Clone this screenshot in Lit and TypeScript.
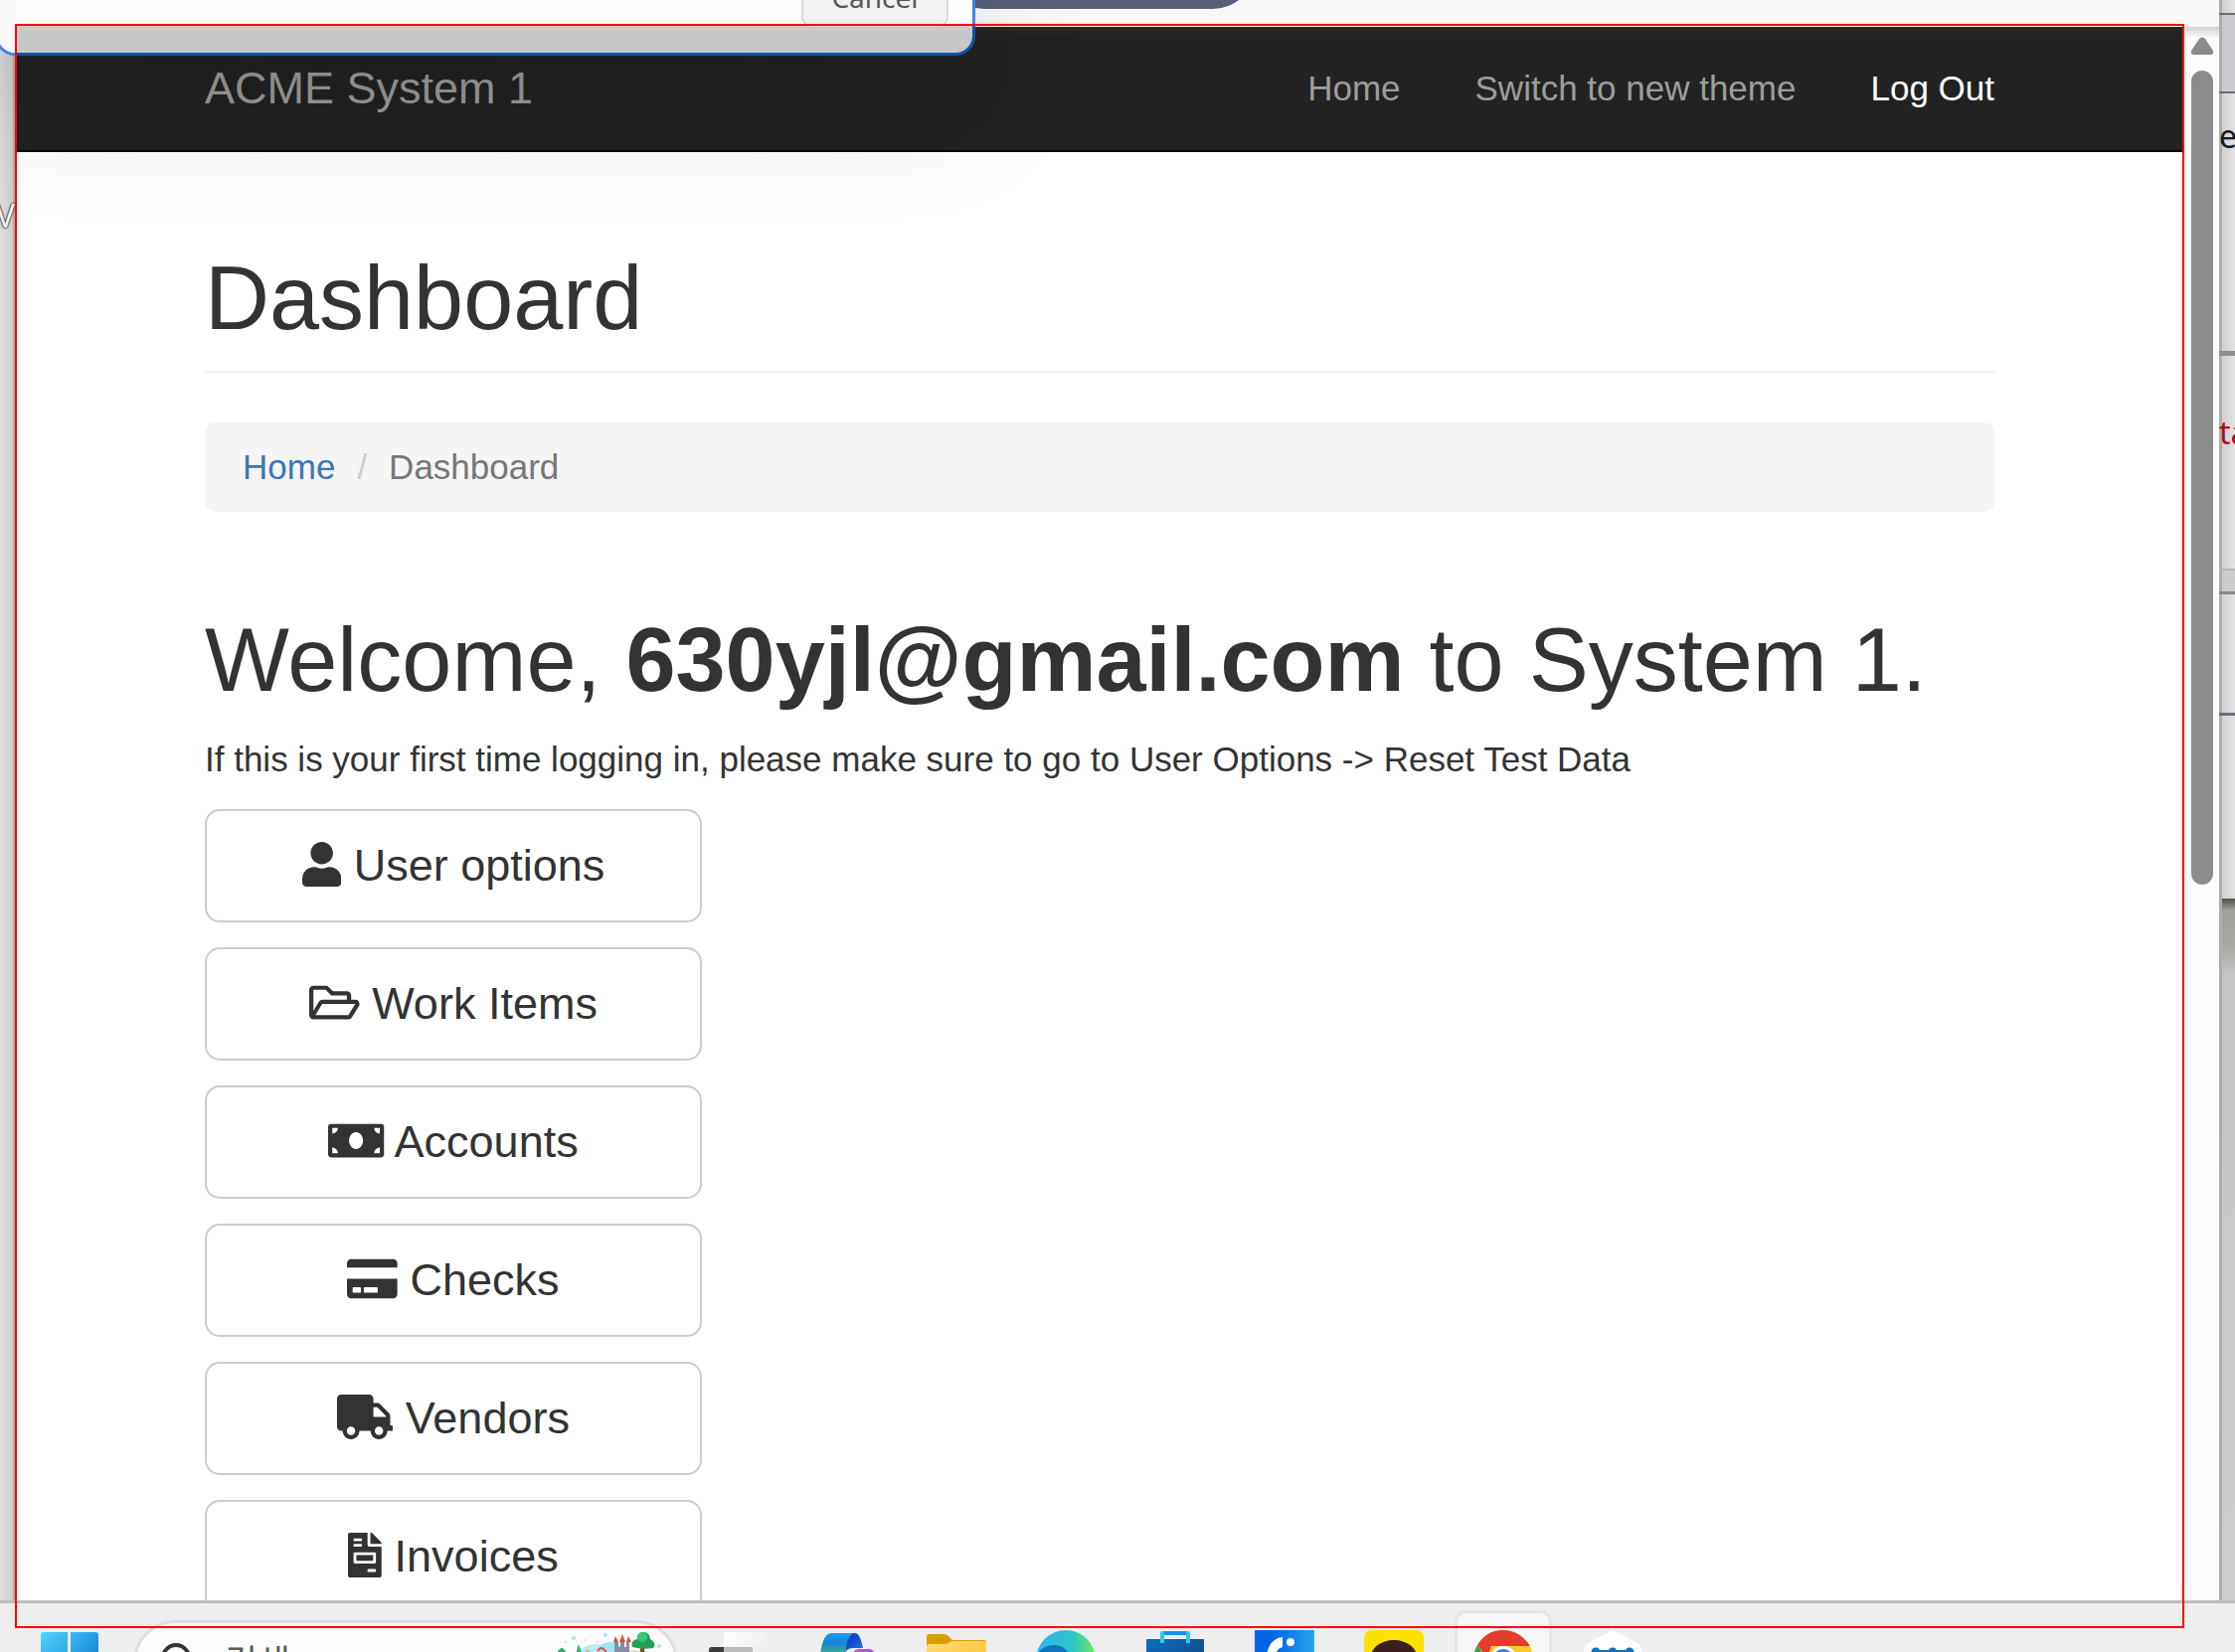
import { LitElement, html, svg, css } from "lit";
import { customElement, property } from "lit/decorators.js";

interface MenuItem {
  label: string;
  width: number;
  path: string;
}

// Icon glyphs share a 512-unit em height; width varies per glyph.
const MENU: MenuItem[] = [
  {
    label: "User options",
    width: 448,
    path: "M224 256c70.7 0 128-57.3 128-128S294.7 0 224 0 96 57.3 96 128s57.3 128 128 128zm89.6 32h-16.7c-22.2 10.2-46.9 16-72.9 16s-50.6-5.8-72.9-16h-16.7C60.2 288 0 348.2 0 422.4V464c0 26.5 21.5 48 48 48h352c26.5 0 48-21.5 48-48v-41.6c0-74.2-60.2-134.4-134.4-134.4z",
  },
  {
    label: "Work Items",
    width: 576,
    path: "M527.9 224H480v-48c0-26.5-21.5-48-48-48H272l-64-64H48C21.5 64 0 85.5 0 112v288c0 26.5 21.5 48 48 48h400c16.5 0 31.9-8.5 40.7-22.6l79.9-128c20-31.9-3-73.4-40.7-73.4zM48 118c0-3.3 2.7-6 6-6h134.1l64 64H426c3.3 0 6 2.7 6 6v42H152c-16.8 0-32.4 8.8-41.1 23.2L48 351.4zm400 282H72l77.2-128H528z",
  },
  {
    label: "Accounts",
    width: 640,
    path: "M608 64H32C14.33 64 0 78.33 0 96v320c0 17.67 14.33 32 32 32h576c17.67 0 32-14.33 32-32V96c0-17.67-14.33-32-32-32zM48 400v-64c35.35 0 64 28.65 64 64H48zm0-224v-64h64c0 35.35-28.65 64-64 64zm272 176c-44.19 0-80-42.99-80-96 0-53.02 35.82-96 80-96s80 42.98 80 96c0 53.03-35.83 96-80 96zm272 48h-64c0-35.35 28.65-64 64-64v64zm0-224c-35.35 0-64-28.65-64-64h64v64z",
  },
  {
    label: "Checks",
    width: 576,
    path: "M0 432c0 26.5 21.5 48 48 48h480c26.5 0 48-21.5 48-48V256H0v176zm192-68c0-6.6 5.4-12 12-12h136c6.6 0 12 5.4 12 12v40c0 6.6-5.4 12-12 12H204c-6.6 0-12-5.4-12-12v-40zm-128 0c0-6.6 5.4-12 12-12h72c6.6 0 12 5.4 12 12v40c0 6.6-5.4 12-12 12H76c-6.6 0-12-5.4-12-12v-40zM576 80v48H0V80c0-26.5 21.5-48 48-48h480c26.5 0 48 21.5 48 48z",
  },
  {
    label: "Vendors",
    width: 640,
    path: "M624 352h-16V243.9c0-12.7-5.1-24.9-14.1-33.9L494 110.1c-9-9-21.2-14.1-33.9-14.1H416V48c0-26.5-21.5-48-48-48H48C21.5 0 0 21.5 0 48v320c0 26.5 21.5 48 48 48h16c0 53 43 96 96 96s96-43 96-96h128c0 53 43 96 96 96s96-43 96-96h48c8.8 0 16-7.2 16-16v-32c0-8.8-7.2-16-16-16zM160 464c-26.5 0-48-21.5-48-48s21.5-48 48-48 48 21.5 48 48-21.5 48-48 48zm320 0c-26.5 0-48-21.5-48-48s21.5-48 48-48 48 21.5 48 48-21.5 48-48 48zm80-208H416V144h44.1l99.9 99.9V256z",
  },
  {
    label: "Invoices",
    width: 384,
    path: "M288 256H96v64h192v-64zm89-151L279.1 7c-4.5-4.5-10.6-7-17-7H256v128h128v-6.1c0-6.3-2.5-12.4-7-16.9zm-153 31V0H24C10.7 0 0 10.7 0 24v464c0 13.3 10.7 24 24 24h336c13.3 0 24-10.7 24-24V160H248c-13.2 0-24-10.8-24-24zM64 72c0-4.42 3.58-8 8-8h80c4.42 0 8 3.58 8 8v16c0 4.42-3.58 8-8 8H72c-4.42 0-8-3.58-8-8V72zm0 64c0-4.42 3.58-8 8-8h80c4.42 0 8 3.58 8 8v16c0 4.42-3.58 8-8 8H72c-4.42 0-8-3.58-8-8v-16zm256 304c0 4.42-3.58 8-8 8h-80c-4.42 0-8-3.58-8-8v-16c0-4.42 3.58-8 8-8h80c4.42 0 8 3.58 8 8v16zm0-200v96c0 8.84-7.16 16-16 16H80c-8.84 0-16-7.16-16-16v-96c0-8.84 7.16-16 16-16h224c8.84 0 16 7.16 16 16z",
  },
];

@customElement("dashboard-page")
export class DashboardPage extends LitElement {
  @property() email = "";

  static styles = css`
    :host {
      display: block;
      background: #fff;
      color: #333;
      font-family: "Liberation Sans", Arial, sans-serif;
      font-size: 35px;
      line-height: 50px;
    }
    .container {
      max-width: 1800px;
      margin: 0 auto;
    }
    .navbar {
      background: linear-gradient(#282c2a, #222 8px);
      border-bottom: 2px solid #080808;
    }
    .bar {
      display: flex;
      align-items: center;
      justify-content: space-between;
      height: 124px;
    }
    .brand {
      color: #9d9d9d;
      font-size: 45px;
      text-decoration: none;
    }
    .links {
      display: flex;
      gap: 75px;
    }
    .links a {
      color: #9d9d9d;
      text-decoration: none;
    }
    .links .active {
      color: #fff;
    }
    h1 {
      margin: 0;
      font-size: 90px;
      font-weight: 400;
      line-height: 99px;
    }
    .header {
      margin: 98px 0 50px;
      padding-bottom: 23px;
      border-bottom: 2px solid #eee;
    }
    .crumbs {
      display: flex;
      gap: 22px;
      margin: 0 0 100px;
      padding: 20px 38px;
      list-style: none;
      background: #f5f5f5;
      border-radius: 10px;
      color: #777;
    }
    .crumbs a {
      color: #3c76b8;
      text-decoration: none;
    }
    .slash {
      color: #ccc;
    }
    .intro {
      margin: 25px 0;
    }
    .menu {
      display: grid;
      grid-template-columns: minmax(0, 500px);
      gap: 25px;
    }
    .item {
      display: flex;
      align-items: center;
      justify-content: center;
      padding: 25px 40px;
      border: 2px solid #ccc;
      border-radius: 15px;
      background: #fff;
      color: #333;
      font: 45px/60px "Liberation Sans", Arial, sans-serif;
    }
    .label {
      white-space: pre;
    }
    .icon {
      height: 45px;
      margin-bottom: 4px;
      fill: currentColor;
    }
  `;

  render() {
    return html`
      <nav class="navbar">
        <div class="container bar">
          <a class="brand" href="#">ACME System 1</a>
          <div class="links">
            <a href="#">Home</a>
            <a href="#">Switch to new theme</a>
            <a class="active" href="#">Log Out</a>
          </div>
        </div>
      </nav>
      <main class="container">
        <header class="header"><h1>Dashboard</h1></header>
        <ol class="crumbs">
          <li><a href="#">Home</a></li>
          <li class="slash">/</li>
          <li>Dashboard</li>
        </ol>
        <h1>Welcome, <b>${this.email}</b> to System 1.</h1>
        <p class="intro">If this is your first time logging in, please make sure to go to User Options -&gt; Reset Test Data</p>
        <div class="menu">
          ${MENU.map(
            (m) => html`<button class="item" type="button">
              <svg class="icon" viewBox="0 0 ${m.width} 512" aria-hidden="true"><path d=${m.path}></path></svg>
              <span class="label">${" " + m.label}</span>
            </button>`
          )}
        </div>
      </main>
    `;
  }
}

// Taskbar icons are drawn in a 60 x 60 box.
const TASK_VIEW = svg`
  <defs>
    <linearGradient id="g" x1="0" y1="0" x2="1" y2="1"><stop offset="0" stop-color="#fff"/><stop offset="1" stop-color="#e4e4e4"/></linearGradient>
  </defs>
  <rect x="1" y="17" width="44" height="40" rx="3" fill="#3c3c3c"/>
  <rect x="16" y="2" width="44" height="44" rx="3" fill="url(#g)"/>
  <rect x="16" y="17" width="29" height="30" fill="#bcbcbc"/>`;

const COPILOT = svg`
  <defs>
    <linearGradient id="a" x1="0" y1="0" x2="0" y2="1"><stop offset="0" stop-color="#1f9cf0"/><stop offset=".2" stop-color="#1386dc"/><stop offset=".4" stop-color="#3aa58c"/><stop offset="1" stop-color="#e8c52c"/></linearGradient>
    <linearGradient id="b" x1="0" y1="0" x2="1" y2="1"><stop offset="0" stop-color="#0a28b8"/><stop offset="1" stop-color="#1f78e6"/></linearGradient>
    <linearGradient id="c" x1="0" y1="0" x2="1" y2="0"><stop offset="0" stop-color="#c85fc8"/><stop offset="1" stop-color="#9a4fe8"/></linearGradient>
  </defs>
  <path d="M3 24Q6 3 14 3H40Q31 5 28 22L20 50H4Q-2 46 3 24Z" fill="url(#a)"/>
  <path d="M28 22Q31 3 38 3Q43 3 46 18H36Q31 18 28 22Z" fill="url(#b)"/>
  <path d="M36 24Q37 19 42 19H52Q58 19 58 28V50H30Z" fill="url(#c)"/>`;

const FOLDER = svg`
  <defs><linearGradient id="f" x1="0" y1="0" x2="1" y2="1"><stop offset="0" stop-color="#ffdc73"/><stop offset="1" stop-color="#fcbc2c"/></linearGradient></defs>
  <path d="M0 7Q0 4 3 4H18Q20 4 22 6L26 10H58Q60 10 60 13V30H0Z" fill="#dc9c08"/>
  <path d="M0 17Q0 14 3 14H18Q20 14 22 13L25 11H57Q60 11 60 14V54H0Z" fill="url(#f)"/>`;

const EDGE = svg`
  <defs>
    <linearGradient id="e" x1="0" y1="0" x2="1" y2="0"><stop offset="0" stop-color="#32b4f6"/><stop offset=".6" stop-color="#2cc4c8"/><stop offset="1" stop-color="#6cea58"/></linearGradient>
  </defs>
  <circle cx="30" cy="30" r="30" fill="url(#e)"/>
  <path d="M1 24Q8 15 18 15Q32 15 36 32L30 60Q0 54 1 24Z" fill="#1074bc"/>`;

const STORE = svg`
  <defs><linearGradient id="s" x1="0" y1="0" x2="1" y2="1"><stop offset="0" stop-color="#0a6cc4"/><stop offset="1" stop-color="#18406e"/></linearGradient></defs>
  <path d="M1 10Q1 9 2 9H58Q59 9 59 10V56H1Z" fill="url(#s)"/>
  <path d="M17 13V3H43V13" fill="none" stroke="#28c8fa" stroke-width="4" stroke-linejoin="round"/>
  <path d="M19 3H41" stroke="#1494f0" stroke-width="4"/>`;

const INFO = svg`
  <defs><linearGradient id="i" x1="0" y1="0" x2="1" y2="0"><stop offset=".3" stop-color="#0064e4"/><stop offset="1" stop-color="#28a4f0"/></linearGradient></defs>
  <rect width="60" height="60" fill="url(#i)"/>
  <path d="M12 28Q13 9 28 7V17Q21 19 20 28Z" fill="#fff"/>
  <circle cx="36" cy="12" r="4" fill="#fff"/>
  <path d="M32 24H40V50H32Z" fill="#fff"/>`;

const TALK = svg`
  <rect width="60" height="60" rx="7" fill="#fce000"/>
  <ellipse cx="30" cy="29" rx="24" ry="19" fill="#3c1e1e"/>`;

const CHROME = svg`
  <circle cx="30" cy="30" r="30" fill="#fbc52c"/>
  <path d="M4 15L17 36L30 60A30 30 0 0 1 4 15Z" fill="#34a050"/>
  <path d="M18 16H57Q46 0 30 0Q13 0 4 15L14 28Z" fill="#e53c30"/>
  <circle cx="30" cy="30" r="14" fill="#fff"/>
  <circle cx="30" cy="30" r="11" fill="#3c7eee"/>`;

const HEX = svg`
  <path d="M26 2Q30 -1 34 2L55 13Q59 15 59 20V44L30 60L1 44V20Q1 15 5 13Z" fill="#fff"/>
  <path d="M13 42V22M30 42V22M47 42V22" stroke="#1074bc" stroke-width="9" stroke-linecap="round"/>
  <path d="M13 20H47V42H13Z" fill="#1074bc"/>`;

const APPS = [
  { name: "Task view", art: TASK_VIEW },
  { name: "Copilot", art: COPILOT },
  { name: "File Explorer", art: FOLDER },
  { name: "Edge", art: EDGE },
  { name: "Store", art: STORE },
  { name: "Info", art: INFO },
  { name: "Talk", art: TALK },
  { name: "Chrome", art: CHROME, active: true },
  { name: "Hub", art: HEX },
];

@customElement("task-bar")
export class TaskBar extends LitElement {
  static styles = css`
    :host {
      display: flex;
      height: 49px;
      overflow: hidden;
      padding-left: 15px;
      background: #eee;
      font-family: "Noto Sans CJK KR", sans-serif;
    }
    .slot {
      flex: none;
      display: flex;
      justify-content: center;
      width: 110px;
      height: 100px;
      padding: 27px 0 0;
      box-sizing: border-box;
      border: 0;
      background: none;
    }
    .art {
      width: 60px;
      height: 60px;
      flex: none;
      overflow: visible;
    }
    .active {
      width: 98px;
      margin: 7px 6px 0;
      padding-top: 17px;
      border: 3px solid #e5e5e5;
      border-radius: 12px;
      background: #f6f6f6;
    }
    .search {
      flex: none;
      display: flex;
      align-items: center;
      gap: 32px;
      box-sizing: border-box;
      width: 548px;
      height: 84px;
      margin: 17px 5px 0 9px;
      padding: 0 8px 4px 25px;
      border: 3px solid #dedede;
      border-radius: 42px;
      background: #fbfbfb;
    }
    .lens {
      flex: none;
      width: 32px;
      height: 40px;
    }
    .field {
      flex: 1;
      min-width: 0;
      padding: 0;
      border: 0;
      outline: 0;
      background: none;
      color: #5c5c5c;
      font: 36px/50px "Noto Sans CJK KR", sans-serif;
    }
    .field::placeholder {
      color: #5c5c5c;
      opacity: 1;
    }
    .scene {
      flex: none;
      width: 112px;
      height: 60px;
    }
  `;

  render() {
    return html`
      <button class="slot" type="button" aria-label="Start">
        <svg class="art" viewBox="0 0 60 60">
          <defs>
            <linearGradient id="w" x1="0" y1="0" x2="1" y2="1">
              <stop offset="0" stop-color="#50d4ff" /><stop offset="1" stop-color="#0068c8" />
            </linearGradient>
          </defs>
          <path d="M4 2H28V29H1V5Q1 2 4 2ZM31 2H56Q59 2 59 5V29H31ZM1 32H28V59H1ZM31 32H59V59H31Z" fill="url(#w)" />
        </svg>
      </button>
      <label class="search">
        <svg class="lens" viewBox="0 0 32 40" fill="none" stroke="#333" stroke-width="4">
          <circle cx="15" cy="18" r="13" /><path d="M23 28L31 37" />
        </svg>
        <input class="field" type="text" placeholder="검색" aria-label="검색" />
        <svg class="scene" viewBox="0 0 112 60">
          <ellipse cx="40" cy="24" rx="16" ry="10" fill="#b8ecf8" />
          <ellipse cx="55" cy="20" rx="12" ry="8" fill="#a4e2f6" />
          <ellipse cx="78" cy="28" rx="22" ry="8" fill="#dfe3c8" />
          <g fill="#a8e6f6">
            <circle cx="18" cy="8" r="2" /><circle cx="30" cy="10" r="1" /><circle cx="50" cy="5" r="2" />
            <circle cx="42" cy="12" r="1" /><circle cx="104" cy="16" r="2" /><circle cx="10" cy="12" r="1" />
          </g>
          <path d="M0 26Q6 10 12 26Z" fill="#2cb070" />
          <path d="M19 28L23 14L28 28Z" fill="#28b070" />
          <path d="M28 26L32 19L36 26Z" fill="#e8a030" />
          <path d="M42 21Q46 15 50 21V26" fill="none" stroke="#e65048" stroke-width="2" />
          <path d="M59 12H63V17H65V12H69V17H71V12H74V40H59Z" fill="#8a8ca4" />
          <path d="M58 12L60 6L63 12ZM64 12L67 4L70 12ZM71 12L73 6L76 12Z" fill="#e2503c" />
          <path d="M85 16H89L90 40H85Z" fill="#7c4a34" />
          <path d="M77 17Q75 10 82 9Q82 2 89 2Q95 3 95 9Q102 13 98 18Q87 20 77 17Z" fill="#24a05c" />
          <circle cx="87" cy="7" r="5" fill="#34c878" />
        </svg>
      </label>
      ${APPS.map(
        (a) => html`<button class="slot ${a.active ? "active" : ""}" type="button" aria-label=${a.name}>
          <svg class="art" viewBox="0 0 60 60">${a.art}</svg>
        </button>`
      )}
    `;
  }
}

@customElement("app-root")
export class AppRoot extends LitElement {
  static styles = css`
    :host {
      display: flex;
      flex-direction: column;
      position: relative;
      height: 100vh;
      overflow: hidden;
      font-family: "Noto Sans", sans-serif;
    }
    .desktop {
      flex: 1;
      min-height: 0;
      display: flex;
      border-bottom: 3px solid #bdbdbd;
    }
    .strip {
      flex: none;
      overflow: hidden;
      font-size: 32px;
      line-height: 40px;
    }
    .left {
      display: flex;
      flex-direction: column;
      align-items: flex-end;
      box-sizing: border-box;
      width: 16px;
      padding: 197px 1px 0 0;
      background: linear-gradient(90deg, #dedede, #cecece 13px, #adadad 13px);
      color: #f4f4f4;
      text-shadow: 0 0 2px #222, 0 0 2px #222, 0 0 1px #222;
    }
    .right {
      display: flex;
      flex-direction: column;
      width: 16px;
      background: linear-gradient(90deg, #adadad 3px, #d2d2d2 3px, #e2e2e2);
      color: #181818;
    }
    .pane {
      flex: none;
      box-sizing: border-box;
      border-bottom: 2px solid #6c6c72;
      overflow: hidden;
    }
    .p1 { height: 15px; }
    .p2 { height: 79px; background: linear-gradient(90deg, transparent 3px, #c9cacd 3px); }
    .p3 { height: 264px; padding-top: 23px; border-bottom: 5px solid #8f8f8f; }
    .p4 { height: 216px; padding-top: 57px; border-color: #b4b4b8; color: #b00c1c; }
    .p5 { height: 24px; background: linear-gradient(90deg, transparent 3px, #ccccce 3px); border-bottom: 3px solid #888; }
    .p6 { height: 122px; border-bottom: 3px solid #66707a; }
    .p7 { height: 184px; border: 0; }
    .photo {
      flex: 1;
      margin-left: 3px;
      background: linear-gradient(#50504e, #a09f9c 12px, #aaa9a6 50px, #c4c4c4 76px, #cfcfcf);
    }
    .window {
      flex: 1;
      min-width: 0;
      display: flex;
      flex-direction: column;
    }
    .titlebar {
      flex: none;
      height: 27px;
      overflow: hidden;
      background: #faf8f9;
    }
    .pill {
      width: 314px;
      height: 84px;
      margin: -75px 0 0 932px;
      border-radius: 42px;
      background: #565f78;
    }
    .view {
      flex: 1;
      min-height: 0;
      display: flex;
    }
    .page {
      flex: 1;
      min-width: 0;
      overflow: hidden;
    }
    .scroll {
      flex: none;
      display: flex;
      flex-direction: column;
      align-items: center;
      box-sizing: border-box;
      width: 36px;
      padding-left: 2px;
      background: linear-gradient(#d0d2d2, #fcfcfc 12px);
    }
    .arrow {
      flex: none;
      width: 24px;
      height: 18px;
      margin: 10px 0 16px;
    }
    .thumb {
      width: 22px;
      height: 53%;
      max-height: 819px;
      border-radius: 11px;
      background: #8b8b8b;
    }
    .dialog {
      position: absolute;
      top: -44px;
      left: -5px;
      display: flex;
      align-items: flex-end;
      justify-content: flex-end;
      box-sizing: border-box;
      width: 986px;
      height: 100px;
      padding: 0 24px 26px 0;
      border: 3px solid transparent;
      border-radius: 20px;
      background:
        linear-gradient(90deg, #f8f8f8 18px, transparent 18px) padding-box,
        linear-gradient(#fdfdfd 67px, #c9c9c9 67px, #c6c6c6) padding-box,
        linear-gradient(90deg, #3a88e6 21px, transparent 21px) border-box,
        linear-gradient(#3a88e6 70px, #0a56ae 70px) border-box;
      box-shadow: 0 50px 120px rgba(0, 0, 0, 0.2);
    }
    .cancel {
      width: 148px;
      height: 60px;
      border: 2px solid #d9d9d9;
      border-radius: 10px;
      background: #f1f1f4;
      color: #555;
      font: 28px/40px "Noto Sans", sans-serif;
    }
    .selection {
      position: absolute;
      inset: 24px 51px 24px 15px;
      border: 2px solid #f00;
      pointer-events: none;
    }
  `;

  render() {
    return html`
      <div class="desktop">
        <div class="strip left">V</div>
        <section class="window">
          <div class="titlebar"><div class="pill"></div></div>
          <div class="view">
            <dashboard-page class="page" email="630yjl@gmail.com"></dashboard-page>
            <div class="scroll">
              <svg class="arrow" viewBox="0 0 24 18">
                <path d="M9 2Q12 -1 15 2L23 14Q24 18 20 18H4Q0 18 1 14Z" fill="#8b8b8b" />
              </svg>
              <div class="thumb"></div>
            </div>
          </div>
        </section>
        <div class="strip right">
          <div class="pane p1"></div>
          <div class="pane p2"></div>
          <div class="pane p3">e</div>
          <div class="pane p4">ta</div>
          <div class="pane p5"></div>
          <div class="pane p6"></div>
          <div class="pane p7"></div>
          <div class="photo"></div>
        </div>
      </div>
      <task-bar></task-bar>
      <div class="dialog"><button class="cancel" type="button">Cancel</button></div>
      <div class="selection"></div>
    `;
  }
}
